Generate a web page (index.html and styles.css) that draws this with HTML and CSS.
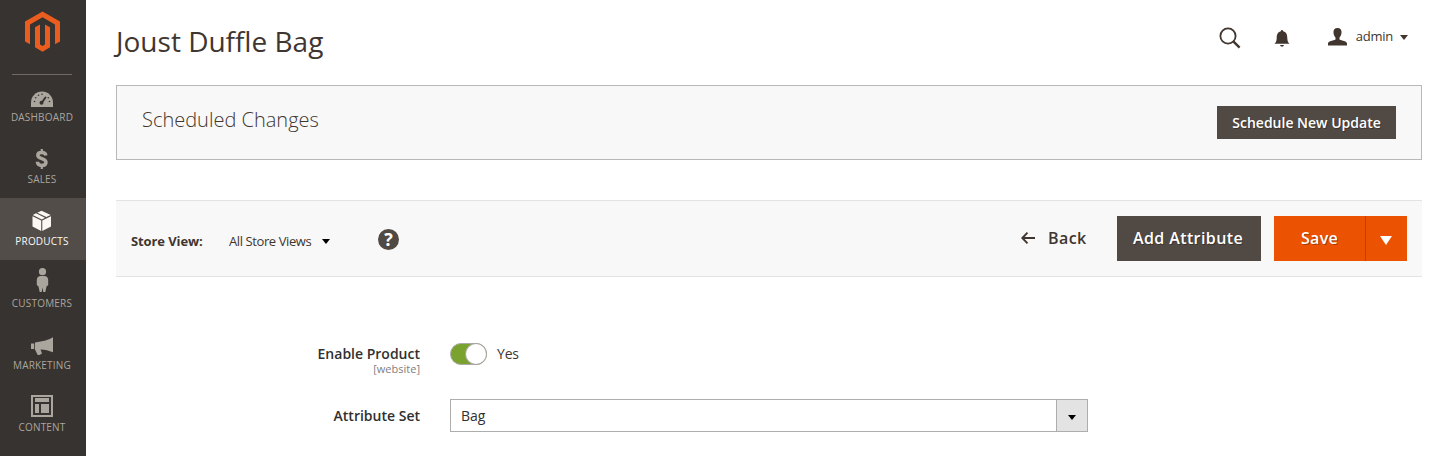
FILE: index.html
```html
<!DOCTYPE html>
<html lang="en">
<head>
<meta charset="utf-8">
<title>Joust Duffle Bag</title>
<link rel="stylesheet" href="styles.css">
</head>
<body>
<div class="page">
  <nav class="menu">
    <a class="logo"><svg width="86" height="74" viewBox="0 0 86 74"><path fill="#eb5d1f" d="M42.500 11.500 60 21.500V41.500L55 44.300V24.400L42.500 17.200 30 24.400V44.300L25 41.500V21.500ZM35 27.300 40 24.500V44.500L42.500 46 45 44.500V24.500L50 27.300V47.300L42.500 51.700 35 47.300Z"/></svg></a>
    <ul class="menu-list">
      <li class="item first"><svg class="item-icon" viewBox="0 0 86 36"><path fill="#aaa69e" d="M31 33V28.500a11 11 0 0 1 22 0V33Z"/><path stroke="#373330" stroke-width="2" stroke-linecap="round" d="M41.500 29 45.500 23.500"/><g fill="#373330"><circle cx="41.500" cy="28.800" r="2"/><circle cx="34.500" cy="27.500" r=".8"/><circle cx="35.700" cy="23.800" r=".8"/><circle cx="38.500" cy="21.200" r=".8"/><circle cx="42" cy="20.300" r=".8"/><circle cx="48.300" cy="23.800" r=".8"/><circle cx="49.500" cy="27.500" r=".8"/></g></svg><span>DASHBOARD</span></li>
      <li class="item"><svg class="item-icon" viewBox="0 0 86 36"><path fill="none" stroke="#aaa69e" stroke-width="3.500" d="M45.800 19.500C45.600 17.400 44 16.500 41.800 16.500 39.500 16.500 37.800 17.400 37.800 19.200 37.800 23.500 46 21.700 46 26.300 46 28.400 44.200 29.500 41.800 29.500 39.200 29.500 37.500 28.200 37.400 25.800"/><path stroke="#aaa69e" stroke-width="2.200" d="M41.800 13V16.500M41.800 29.500V33"/></svg><span>SALES</span></li>
      <li class="item active"><svg class="item-icon" viewBox="0 0 86 36"><path fill="#fbf8f3" d="M32.500 18.300 41.200 22.500V33L32.500 28.400ZM51 18.300 42.300 22.500V33L51 28.400ZM32.800 17 36 15.300 45 19.700 41.800 21.400ZM37.300 14.700 41.500 12.700 50.700 17 46.300 19.100Z"/></svg><span>PRODUCTS</span></li>
      <li class="item"><svg class="item-icon" viewBox="0 0 86 36"><g fill="#aaa69e"><circle cx="42.500" cy="11.700" r="3.600"/><path d="M40 16H45Q48 16.500 48.200 20V25L46.500 26.500 45.300 32H43.300L42.500 27.500 41.700 32H39.700L38.500 26.500 36.800 25V20Q37 16.500 40 16Z"/></g></svg><span>CUSTOMERS</span></li>
      <li class="item"><svg class="item-icon" viewBox="0 0 86 36"><path fill="#aaa69e" d="M31 21.500H34.200V27H31ZM35 20.500C43 19.500 49 18 53 15.300V30.300C49 28.500 45 27.800 40.500 27.500L42 31.500 39.500 33H37.700L35 27.500Z"/></svg><span>MARKETING</span></li>
      <li class="item"><svg class="item-icon" viewBox="0 0 86 36"><path fill="#aaa69e" fill-rule="evenodd" d="M31 11H53V33H31ZM33 13V31H51V13Z"/><path fill="#aaa69e" d="M35 14H49V18H35ZM35 20H39V29H35ZM41 20H49V29H41Z"/></svg><span>CONTENT</span></li>
    </ul>
  </nav>
  <main class="main">
    <header class="header">
      <h1 class="title">Joust Duffle Bag</h1>
      <div class="tools">
        <svg class="search" width="22" height="22" viewBox="0 0 22 22" fill="none" stroke="#41362f"><circle cx="9" cy="9" r="7.600" stroke-width="1.800"/><path stroke-width="2.400" d="M14.300 14.300 20.600 20.600"/></svg>
        <svg class="bell" width="16" height="17" viewBox="0 0 16 17" fill="#41362f"><path d="M8 0Q9 0 9.200 1.200C12.500 2 13.200 4.500 13.300 8 13.400 11 14 12.300 15.500 13.800H.5C2 12.300 2.600 11 2.700 8 2.800 4.500 3.500 2 6.800 1.200Q7 0 8 0ZM6 15H10Q9.500 16.800 8 16.800T6 15Z"/></svg>
        <div class="account">
          <svg width="19" height="18" viewBox="0 0 19 18" fill="#41362f"><path d="M9.500 0C12.300 0 13.800 1.800 13.500 4.500 13.400 6.500 12.700 8.300 11.500 9.500V11.500C14 12.800 19 13 19 15.500V17.500H0V15.500C0 13 5 12.800 7.500 11.500V9.500C6.300 8.300 5.600 6.500 5.500 4.500 5.200 1.800 6.700 0 9.500 0Z"/></svg>
          <span class="account-name">admin</span>
          <svg width="8" height="5" viewBox="0 0 8 5"><path fill="#41362f" d="M0 0H8L4 5Z"/></svg>
        </div>
      </div>
    </header>
    <section class="schedule">
      <h2 class="schedule-title">Scheduled Changes</h2>
      <button class="button schedule-button">Schedule New Update</button>
    </section>
    <section class="actions">
      <span class="store-label">Store View:</span>
      <span class="store-name">All Store Views</span>
      <svg class="store-arrow" width="8" height="5" viewBox="0 0 8 5"><path d="M0 0H8L4 5Z"/></svg>
      <span class="help">?</span>
      <div class="buttons">
        <svg class="back-arrow" width="14" height="12" viewBox="0 0 14 12" fill="none" stroke="#41362f" stroke-width="1.900"><path d="M6.500.7 1.300 6 6.500 11.300M1.300 6H14"/></svg>
        <span class="back">Back</span>
        <button class="button add">Add Attribute</button>
        <button class="button save">Save</button>
        <button class="button toggle" aria-label="More"><svg width="12" height="9" viewBox="0 0 12 9"><path fill="#fff" d="M0 0H12L6 9Z"/></svg></button>
      </div>
    </section>
    <section class="form">
      <div class="row enable">
        <div class="label"><span class="enable-text">Enable Product</span><small class="scope">[website]</small></div>
        <span class="switch"><span class="knob"></span></span>
        <span class="yes">Yes</span>
      </div>
      <div class="row">
        <div class="label"><span class="set-text">Attribute Set</span></div>
        <div class="select"><span class="select-value">Bag</span><span class="select-arrow"><svg width="8" height="5" viewBox="0 0 8 5"><path d="M0 0H8L4 5Z"/></svg></span></div>
      </div>
    </section>
  </main>
</div>
</body>
</html>
```

FILE: styles.css
```css
* { box-sizing: border-box; }
body { margin: 0; background: #fff; color: #41362f; font-family: "Open Sans", sans-serif; overflow: hidden; }
svg { display: block; flex: none; }
button { border: 0; font-family: inherit; padding: 0; }
.page { display: flex; height: 456px; overflow: hidden; }
.menu { width: 86px; flex: none; background: #373330; }
.logo { display: block; height: 74px; }
.menu-list { margin: 0; padding: 0; list-style: none; }
.item { height: 62px; color: #aaa69e; font-size: 10px; letter-spacing: .2px; line-height: 14px; text-align: center; }
.item span { display: block; padding-right: 2px; white-space: nowrap; }
.item-icon { width: 86px; height: 36px; }
.first { background: linear-gradient(#736963, #736963) 12px 0 / 60px 1px no-repeat; }
.active { background: #524d49; color: #fbf8f3; }
.main { flex: 1; padding: 0 29px 0 30px; }
.header { height: 85px; display: flex; justify-content: space-between; }
.title { margin: 21px 0 0; font-size: 28px; line-height: 40px; font-weight: 400; white-space: nowrap; }
.tools { display: flex; align-items: flex-start; padding-right: 14px; }
.search { margin-top: 27px; }
.bell { margin: 30px 38px 0 33px; }
.account { display: flex; align-items: center; height: 18px; margin-top: 28px; }
.account-name { margin: -2px 7px 0 9px; font-size: 13px; letter-spacing: -.25px; line-height: 18px; }
.schedule { height: 75px; border: 1px solid #b8b8b8; background: #f8f8f8; display: flex; justify-content: space-between; padding: 20px 25px; }
.schedule-title { margin: 0; font-size: 20px; line-height: 27px; font-weight: 300; }
.button { color: #fff; background: #514943; font-weight: 600; text-shadow: 1px 1px 0 rgba(0, 0, 0, .3); white-space: nowrap; }
.schedule-button { width: 179px; height: 33px; font-size: 14px; }
.actions { margin-top: 40px; height: 77px; display: flex; align-items: center; border: solid #e3e3e3; border-width: 1px 0; background: #f8f8f8; padding: 0 15px; }
.store-label { width: 98px; padding-top: 4px; font-size: 13px; font-weight: 700; letter-spacing: -.1px; }
.store-name { width: 93px; padding-top: 4px; font-size: 13px; letter-spacing: -.4px; white-space: nowrap; }
.store-arrow { margin-top: 6px; }
.help { width: 21px; height: 21px; margin: 1px 0 0 48px; border-radius: 50%; background: #514943; color: #fff; font-size: 18px; font-weight: 700; line-height: 21px; text-align: center; }
.buttons { margin-left: auto; display: flex; align-items: center; }
.back-arrow { margin: -2px 0 0 1px; }
.back { width: 69px; margin-left: 13px; padding-bottom: 2px; font-size: 16px; font-weight: 600; letter-spacing: .4px; }
.add { width: 144px; height: 45px; margin-right: 13px; padding: 0 2px 2px 0; font-size: 16px; letter-spacing: .4px; }
.save { width: 92px; height: 45px; padding-bottom: 2px; background: #eb5202; border-right: 1px solid #c04302; font-size: 16px; letter-spacing: .3px; }
.toggle { width: 41px; height: 45px; background: #eb5202; display: flex; align-items: center; justify-content: center; padding: 4px 1px 0 0; }
.form { padding-top: 66px; }
.row { display: flex; }
.enable { height: 56px; }
.label { width: 304px; margin-right: 30px; text-align: right; color: #303030; font-size: 14px; font-weight: 600; line-height: 20px; padding-top: 1px; }
.row:last-child .label { padding-top: 7px; }
.scope { display: block; margin-top: -1px; color: #808080; font-size: 11px; font-weight: 400; line-height: 12px; }
.switch { width: 37px; height: 22px; border: 1px solid #aaa; border-radius: 11px; background: #79a22e; display: flex; justify-content: flex-end; }
.knob { width: 20px; height: 20px; border-radius: 50%; background: #fff; box-shadow: 0 0 0 1px #aaa69e; }
.yes { margin-left: 10px; font-size: 14px; letter-spacing: -.2px; line-height: 22px; }
.select { width: 638px; height: 33px; border: 1px solid #adadad; display: flex; justify-content: space-between; }
.select-value { padding-left: 10px; color: #303030; font-size: 14px; line-height: 31px; }
.select-arrow { width: 31px; border-left: 1px solid #adadad; background: #e3e3e3; display: flex; align-items: center; justify-content: center; padding-top: 4px; }
```
